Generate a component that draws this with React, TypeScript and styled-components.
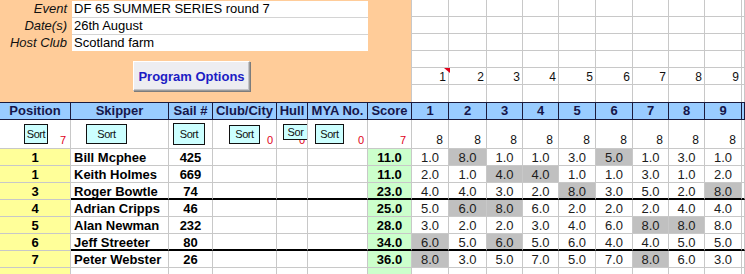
import React from "react";
import styled, { createGlobalStyle } from "styled-components";

const GlobalStyle = createGlobalStyle`
  html, body { margin: 0; padding: 0; background: #ffffff; }
  body {
    font-family: "Liberation Sans", Arial, sans-serif;
    font-size: 13px;
    color: #000;
  }
`;

const GRID = "#c8c8c8";
const MAIN_WIDTHS = [71, 98, 44, 64, 31, 60, 44];
const RACE_WIDTHS = [37, 38, 36, 36, 37, 37, 36, 36, 37];
const COLS = [...MAIN_WIDTHS, ...RACE_WIDTHS].map((w) => `${w}px`).join(" ") + " 1fr";
const RACE_COLS = RACE_WIDTHS.map((w) => `${w}px`).join(" ") + " 1fr";

type Align = "left" | "center" | "right";

const Sheet = styled.div`
  width: 745px;
  height: 274px;
  overflow: hidden;
`;

/* ---------- top area ---------- */
const Top = styled.div`
  display: flex;
  height: 102px;
`;

const OrangePanel = styled.div`
  width: 412px;
  flex: none;
  box-sizing: border-box;
  background: #ffcc99;
  border-right: 1px solid ${GRID};
  display: flex;
  flex-direction: column;
`;

const InfoTable = styled.div`
  display: grid;
  grid-template-columns: 72px 296px;
  grid-auto-rows: 17px;
`;

const InfoLabel = styled.div`
  font-style: italic;
  text-align: right;
  padding-right: 5px;
  line-height: 18px;
  color: #111;
  white-space: nowrap;
`;

const InfoValue = styled.div<{ $first?: boolean }>`
  box-sizing: border-box;
  background: #fff;
  border-top: 1px solid ${(p) => (p.$first ? "#ffcc99" : "#d4d4d4")};
  padding-left: 2px;
  line-height: 16px;
  white-space: nowrap;
`;

const ButtonRow = styled.div`
  display: flex;
  padding: 10px 0 0 133px;
`;

const OptionsButton = styled.button`
  box-sizing: border-box;
  width: 117px;
  height: 30px;
  padding: 0;
  background: #ededf1;
  border: 1px solid;
  border-color: #ffffff #9a9a9a #9a9a9a #ffffff;
  box-shadow: inset -1px -1px 0 #c4c4c8, 1px 1px 0 #7c7c7c;
  font-family: "Liberation Sans", Arial, sans-serif;
  font-weight: 700;
  font-size: 13px;
  color: #1c1cc4;
  cursor: pointer;
`;

const RaceTop = styled.div`
  flex: 1;
  display: grid;
  grid-template-columns: ${RACE_COLS};
  grid-template-rows: repeat(6, 17px);
`;

const RaceTopCell = styled.div<{ $last?: boolean }>`
  position: relative;
  box-sizing: border-box;
  border-right: 1px solid ${GRID};
  border-bottom: ${(p) => (p.$last ? "none" : `1px solid ${GRID}`)};
  text-align: right;
  padding-right: 2px;
  font-size: 12px;
  line-height: 18px;
  color: #111;
`;

const CommentMark = styled.span`
  position: absolute;
  top: 0;
  right: -2px;
  width: 0;
  height: 0;
  border-top: 5px solid #e0001b;
  border-left: 6px solid transparent;
`;

/* ---------- header ---------- */
const HeaderRow = styled.div`
  display: grid;
  grid-template-columns: ${COLS};
  height: 18px;
  box-sizing: border-box;
  background: #99ccff;
  border-top: 1px solid #1a1a3c;
  border-bottom: 1px solid #1a1a3c;
`;

const HeaderCell = styled.div`
  box-sizing: border-box;
  border-right: 1px solid #1a1a3c;
  text-align: center;
  font-weight: 700;
  font-size: 13px;
  line-height: 16px;
  color: #16164a;
  white-space: nowrap;
  overflow: hidden;
`;

/* ---------- sort row ---------- */
const SortRow = styled.div`
  display: grid;
  grid-template-columns: ${COLS};
  height: 29px;
`;

const SortCell = styled.div`
  box-sizing: border-box;
  border-right: 1px solid ${GRID};
  border-bottom: 1px solid ${GRID};
  display: grid;
  grid-template: 1fr / 1fr;
  overflow: hidden;
`;

const CountLabel = styled.span<{ $red?: boolean; $pad: number }>`
  grid-area: 1 / 1;
  justify-self: end;
  align-self: end;
  margin: 0 ${(p) => p.$pad}px 2px 0;
  font-size: ${(p) => (p.$red ? 11 : 12)}px;
  line-height: 12px;
  color: ${(p) => (p.$red ? "#e0001b" : "#111")};
`;

const SortButton = styled.div<{ $x: number; $y: number; $w: number; $h: number }>`
  grid-area: 1 / 1;
  justify-self: start;
  align-self: start;
  margin: ${(p) => p.$y}px 0 0 ${(p) => p.$x}px;
  width: ${(p) => p.$w}px;
  height: ${(p) => p.$h}px;
  box-sizing: border-box;
  background: #ccffff;
  border: 1px solid #111;
  font-size: 11px;
  letter-spacing: -0.4px;
  line-height: ${(p) => p.$h - 2}px;
  text-align: center;
  overflow: hidden;
  white-space: nowrap;
  color: #111;
`;

/* ---------- data ---------- */
const DataRow = styled.div`
  display: grid;
  grid-template-columns: ${COLS};
  height: 17px;
`;

const Cell = styled.div<{ $bg?: string; $align?: Align; $bold?: boolean; $thick?: boolean; $pad?: number }>`
  box-sizing: border-box;
  background: ${(p) => p.$bg ?? "#fff"};
  border-right: 1px solid ${GRID};
  border-bottom: ${(p) => (p.$thick ? "2px solid #000" : `1px solid ${GRID}`)};
  text-align: ${(p) => p.$align ?? "left"};
  font-weight: ${(p) => (p.$bold ? 700 : 400)};
  padding: 1px ${(p) => p.$pad ?? 0}px 0;
  line-height: 15px;
  color: ${(p) => (p.$bold ? "#000" : "#1c1c1c")};
  white-space: nowrap;
  overflow: hidden;
`;

const YELLOW = "#ffff99";
const GREEN = "#ccffcc";
const DROP = "#c0c0c0";

const rows = [
  { pos: "1", name: "Bill Mcphee", sail: "425", score: "11.0", races: [1, 8, 1, 1, 3, 5, 1, 3, 1], drop: [1, 5] },
  { pos: "1", name: "Keith Holmes", sail: "669", score: "11.0", races: [2, 1, 4, 4, 1, 1, 3, 1, 2], drop: [2, 3] },
  { pos: "3", name: "Roger Bowtle", sail: "74", score: "23.0", races: [4, 4, 3, 2, 8, 3, 5, 2, 8], drop: [4, 8] },
  { pos: "4", name: "Adrian Cripps", sail: "46", score: "25.0", races: [5, 6, 8, 6, 2, 2, 2, 4, 4], drop: [1, 2] },
  { pos: "5", name: "Alan Newman", sail: "232", score: "28.0", races: [3, 2, 2, 3, 4, 6, 8, 8, 8], drop: [6, 7] },
  { pos: "6", name: "Jeff Streeter", sail: "80", score: "34.0", races: [6, 5, 6, 5, 6, 4, 4, 5, 5], drop: [0, 2] },
  { pos: "7", name: "Peter Webster", sail: "26", score: "36.0", races: [8, 3, 5, 7, 5, 7, 8, 6, 3], drop: [0, 6] },
];
const thickAfter = [2, 5];

const headers = ["Position", "Skipper", "Sail #", "Club/City", "Hull", "MYA No.", "Score"];
const raceNums = [1, 2, 3, 4, 5, 6, 7, 8, 9];

const sortCells: { x: number; y: number; w: number; h: number; text: string; count?: string; pad: number }[] = [
  { x: 24, y: 4, w: 24, h: 20, text: "Sort", count: "7", pad: 4 },
  { x: 15, y: 4, w: 41, h: 20, text: "Sort", pad: 3 },
  { x: 4, y: 3, w: 32, h: 22, text: "Sort", pad: 3 },
  { x: 16, y: 5, w: 31, h: 19, text: "Sort", count: "0", pad: 3 },
  { x: 6, y: 4, w: 25, h: 16, text: "Sor", count: "0", pad: 3 },
  { x: 7, y: 4, w: 29, h: 20, text: "Sort", count: "0", pad: 3 },
];

export default function App() {
  return (
    <Sheet>
      <GlobalStyle />
      <Top>
        <OrangePanel>
          <InfoTable>
            <InfoLabel>Event</InfoLabel>
            <InfoValue $first>DF 65 SUMMER SERIES round 7</InfoValue>
            <InfoLabel>Date(s)</InfoLabel>
            <InfoValue>26th August</InfoValue>
            <InfoLabel>Host Club</InfoLabel>
            <InfoValue>Scotland farm</InfoValue>
          </InfoTable>
          <ButtonRow>
            <OptionsButton>Program Options</OptionsButton>
          </ButtonRow>
        </OrangePanel>
        <RaceTop>
          {Array.from({ length: 6 }).map((_, r) =>
            Array.from({ length: 10 }).map((__, c) => (
              <RaceTopCell key={`${r}-${c}`} $last={r === 5}>
                {r === 4 && c < 9 ? raceNums[c] : null}
                {r === 4 && c === 0 ? <CommentMark /> : null}
              </RaceTopCell>
            ))
          )}
        </RaceTop>
      </Top>

      <HeaderRow>
        {headers.map((h) => (
          <HeaderCell key={h}>{h}</HeaderCell>
        ))}
        {raceNums.map((n) => (
          <HeaderCell key={`r${n}`}>{n}</HeaderCell>
        ))}
        <HeaderCell />
      </HeaderRow>

      <SortRow>
        {sortCells.map((s, i) => (
          <SortCell key={i}>
            {s.count ? (
              <CountLabel $red $pad={s.pad}>
                {s.count}
              </CountLabel>
            ) : null}
            <SortButton $x={s.x} $y={s.y} $w={s.w} $h={s.h}>
              {s.text}
            </SortButton>
          </SortCell>
        ))}
        <SortCell>
          <CountLabel $red $pad={5}>
            7
          </CountLabel>
        </SortCell>
        {raceNums.map((n) => (
          <SortCell key={`s${n}`}>
            <CountLabel $pad={5}>8</CountLabel>
          </SortCell>
        ))}
        <SortCell />
      </SortRow>

      {rows.map((r, i) => {
        const thick = thickAfter.includes(i);
        return (
          <DataRow key={i}>
            <Cell $bg={YELLOW} $align="center" $bold>
              {r.pos}
            </Cell>
            <Cell $bold $pad={3} $thick={thick}>
              {r.name}
            </Cell>
            <Cell $bold $align="center" $thick={thick}>
              {r.sail}
            </Cell>
            <Cell $thick={thick} />
            <Cell $thick={thick} />
            <Cell $thick={thick} />
            <Cell $bg={GREEN} $bold $align="center" $thick={thick}>
              {r.score}
            </Cell>
            {r.races.map((v, j) => (
              <Cell key={j} $align="center" $bg={r.drop.includes(j) ? DROP : undefined} $thick={thick}>
                {v.toFixed(1)}
              </Cell>
            ))}
            <Cell $thick={thick} />
          </DataRow>
        );
      })}
      <DataRow>
        <Cell $bg={YELLOW} />
        <Cell />
        <Cell />
        <Cell />
        <Cell />
        <Cell />
        <Cell $bg={GREEN} />
        {raceNums.map((n) => (
          <Cell key={n} />
        ))}
        <Cell />
      </DataRow>
    </Sheet>
  );
}
